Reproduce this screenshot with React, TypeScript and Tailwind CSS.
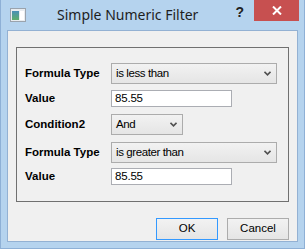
import type { ReactNode } from "react";

const Chevron = () => (
  <svg width="7" height="5" viewBox="0 0 7 5" className="shrink-0">
    <path d="M0.5 0.8 L3.5 3.8 L6.5 0.8" fill="none" stroke="#505050" strokeWidth="1.6" />
  </svg>
);

function Combo({ w, text }: { w: string; text: string }) {
  return (
    <div className={`${w} flex h-[21px] items-center justify-between border border-[#acacac] bg-gradient-to-b from-[#f2f2f2] to-[#e5e5e5] pl-[4px] pr-[5px] text-[11.5px] text-black`}>
      <span className="tracking-[-0.4px]">{text}</span>
      <Chevron />
    </div>
  );
}

function Edit({ value }: { value: string }) {
  return (
    <div className="flex h-[17px] w-[121px] items-center border border-[#abadb3] bg-white pl-[3px] text-[11.5px] tracking-[-0.2px] text-black">{value}</div>
  );
}

function Row({ label, children, cls = "" }: { label: string; children: ReactNode; cls?: string }) {
  return (
    <div className={`flex items-center ${cls}`}>
      <div className="w-[86px] text-[11.5px] font-bold text-black">{label}</div>
      {children}
    </div>
  );
}

function AppIcon() {
  return (
    <svg width="16" height="14" viewBox="0 0 16 14" className="ml-[9px] mt-[8px] shrink-0">
      <rect x="0.5" y="0.5" width="15" height="13" fill="#e8ecf0" stroke="#9aa3ad" />
      <defs>
        <linearGradient id="g" x1="0" y1="0" x2="0" y2="1">
          <stop offset="0" stopColor="#4a8fb8" />
          <stop offset="1" stopColor="#5fae6a" />
        </linearGradient>
      </defs>
      <rect x="2" y="3" width="7" height="9" fill="url(#g)" />
      <rect x="10" y="3" width="4" height="9" fill="#ffffff" />
    </svg>
  );
}

export default function App() {
  return (
    <div className="flex h-[249px] w-[305px] flex-col border-x border-b border-[#8eb0d6] bg-[#b5d3ee] font-['Liberation_Sans',Arial,sans-serif]">
      <div className="flex h-[30px] shrink-0 items-start">
        <AppIcon />
        <div className="ml-[31px] mt-[5px] font-['Noto_Sans',sans-serif] text-[14px] leading-[20px] text-[#1e1e1e]">Simple Numeric Filter</div>
        <div className="ml-auto mr-[10px] mt-[3px] text-[14px] font-bold leading-[18px] text-[#222]">?</div>
        <div className="mr-[5px] flex h-[21px] w-[45px] items-center justify-center bg-[#c75050]">
          <svg width="10" height="9" viewBox="0 0 10 9">
            <path d="M1 0.5 L9 8.5 M9 0.5 L1 8.5" stroke="#ffffff" strokeWidth="2" />
          </svg>
        </div>
      </div>

      <div className="mx-[6px] mb-[6px] flex flex-1 flex-col border border-[#93b1d3] bg-[#f0f0f0]">
        <div className="mx-[8px] mt-[16px] h-[155px] border border-[#707070] pl-[8px] pt-[15px]">
          <Row label="Formula Type">
            <Combo w="w-[166px]" text="is less than" />
          </Row>
          <Row label="Value" cls="mt-[6px]">
            <Edit value="85.55" />
          </Row>
          <Row label="Condition2" cls="mt-[7px]">
            <Combo w="w-[72px]" text="And" />
          </Row>
          <Row label="Formula Type" cls="mt-[7px]">
            <Combo w="w-[166px]" text="is greater than" />
          </Row>
          <Row label="Value" cls="mt-[5px]">
            <Edit value="85.55" />
          </Row>
        </div>

        <div className="mb-[1px] mr-[8px] mt-[16px] flex justify-end gap-[9px]">
          <button className="flex h-[22px] w-[62px] items-center justify-center border border-[#3399ff] bg-gradient-to-b from-[#f2f2f2] to-[#e5e5e5] text-[11.5px] text-black">OK</button>
          <button className="flex h-[22px] w-[62px] items-center justify-center border border-[#acacac] bg-gradient-to-b from-[#f2f2f2] to-[#e5e5e5] text-[11.5px] text-black">Cancel</button>
        </div>
      </div>
    </div>
  );
}
